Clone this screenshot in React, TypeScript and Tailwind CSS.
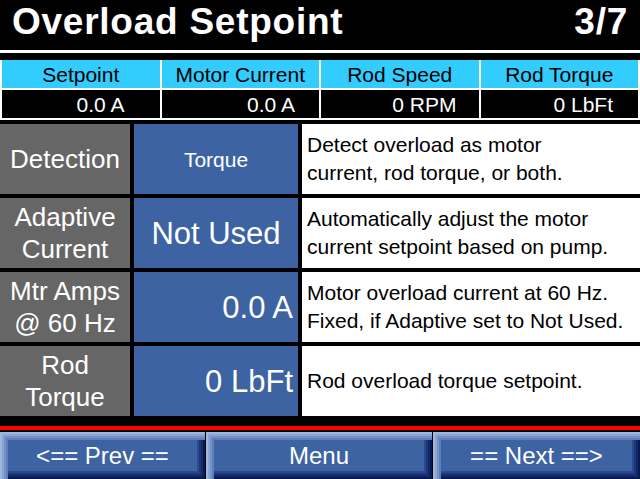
import React from "react";

const headers = ["Setpoint", "Motor Current", "Rod Speed", "Rod Torque"];
const values = [
  { v: "0.0 A", pr: "pr-[35px]" },
  { v: "0.0 A", pr: "pr-[24px]" },
  { v: "0 RPM", pr: "pr-[22px]" },
  { v: "0 LbFt", pr: "pr-[25px]" },
];

type Row = {
  label: string[];
  value: string;
  valueClass: string;
  desc: string[];
};

const rows: Row[] = [
  {
    label: ["Detection"],
    value: "Torque",
    valueClass: "justify-center text-[21px]",
    desc: ["Detect overload as motor", "current, rod torque, or both."],
  },
  {
    label: ["Adaptive", "Current"],
    value: "Not Used",
    valueClass: "justify-center text-[31px]",
    desc: ["Automatically adjust the motor", "current setpoint based on pump."],
  },
  {
    label: ["Mtr Amps", "@ 60 Hz"],
    value: "0.0 A",
    valueClass: "justify-end pr-[5px] text-[31px]",
    desc: ["Motor overload current at 60 Hz.", "Fixed, if Adaptive set to Not Used."],
  },
  {
    label: ["Rod", "Torque"],
    value: "0 LbFt",
    valueClass: "justify-end pr-[5px] text-[31px]",
    desc: ["Rod overload torque setpoint."],
  },
];

const bevel =
  "shadow-[inset_2px_2px_0_#9fb6de,inset_4px_4px_0_#8aa5d4,inset_6px_6px_0_#7592c6,inset_8px_8px_0_#5f7fb8,inset_-2px_-2px_0_#0b1a4e,inset_-4px_-4px_0_#13286a,inset_-6px_-6px_0_#1d377c,inset_-8px_-8px_0_#2a4a8c]";

export default function App() {
  return (
    <div className="w-[640px] h-[479px] bg-black overflow-hidden font-['Liberation_Sans',Arial,sans-serif] select-none">
      {/* Title */}
      <div className="h-[50px] flex justify-between px-[12px] pt-[3px] text-white font-bold text-[37px] leading-none tracking-[0.75px]">
        <span>Overload Setpoint</span>
        <span>3/7</span>
      </div>
      <div className="h-[3px] bg-white" />
      <div className="h-[7px]" />

      {/* Status grid */}
      <div className="bg-white px-[2px] pb-[2px] grid grid-cols-4 gap-[2px]">
        {headers.map((h) => (
          <div
            key={h}
            className="h-[28px] bg-[#33ccff] text-black text-[21px] leading-none flex items-center justify-center whitespace-nowrap"
          >
            {h}
          </div>
        ))}
        {values.map((v, i) => (
          <div
            key={i}
            className={`h-[28px] bg-black text-white text-[21px] leading-none flex items-center justify-end whitespace-nowrap ${v.pr}`}
          >
            {v.v}
          </div>
        ))}
      </div>
      <div className="h-[4px]" />

      {/* Setting rows */}
      <div className="flex flex-col gap-[4px]">
        {rows.map((r, i) => (
          <div key={i} className="h-[70px] grid grid-cols-[130px_164px_338px] gap-[4px]">
            <div className="bg-[#666666] text-white text-[26px] leading-[32px] flex flex-col items-center justify-center whitespace-nowrap">
              {r.label.map((l) => (
                <span key={l}>{l}</span>
              ))}
            </div>
            <div
              className={`bg-[#3d63a2] text-white leading-none flex items-center whitespace-nowrap ${r.valueClass}`}
            >
              {r.value}
            </div>
            <div className="bg-white text-black text-[21px] leading-[28px] flex flex-col justify-center pl-[5px] whitespace-nowrap">
              {r.desc.map((d) => (
                <span key={d}>{d}</span>
              ))}
            </div>
          </div>
        ))}
      </div>

      <div className="h-[10px]" />
      <div className="h-[4px] bg-[#ff0000]" />
      <div className="h-[2px]" />

      {/* Buttons */}
      <div className="h-[47px] flex gap-[1px]">
        {[
          { t: "<== Prev ==", w: "w-[205px]" },
          { t: "Menu", w: "w-[226px]" },
          { t: "== Next ==>", w: "w-[207px]" },
        ].map((b) => (
          <div
            key={b.t}
            className={`${b.w} h-full bg-[#3d63a2] ${bevel} text-white text-[24px] leading-none flex items-center justify-center whitespace-nowrap`}
          >
            {b.t}
          </div>
        ))}
      </div>
    </div>
  );
}
